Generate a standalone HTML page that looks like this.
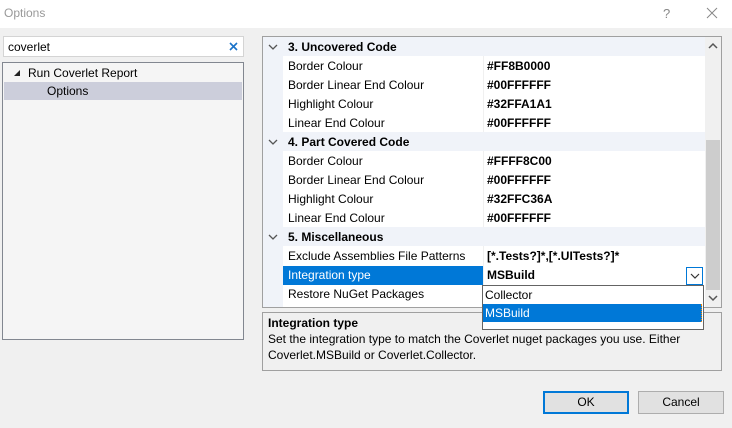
<!DOCTYPE html>
<html><head><style>
*{margin:0;padding:0;box-sizing:border-box}
body{width:732px;height:428px;background:#f0f0f0;font-family:"Liberation Sans",sans-serif;font-size:12px;color:#000;position:relative;overflow:hidden}
.a{position:absolute}
.t{white-space:nowrap;line-height:19px;padding-top:1px}
.b{font-weight:bold}
</style></head><body>
<div class="a" style="left:0;top:0;width:732px;height:28px;background:#fff"></div>
<div class="a t" style="left:4px;top:3px;color:#999;font-size:12px">Options</div>
<div class="a t" style="left:663px;top:3px;color:#888;font-size:13px">?</div>
<svg class="a" style="left:706px;top:7px" width="12" height="12"><path d="M1 1L11 11M11 1L1 11" stroke="#888" stroke-width="1"/></svg>

<div class="a" style="left:3px;top:36px;width:241px;height:21px;background:#fff;border:1px solid #d4d4d4"></div>
<div class="a t" style="left:8px;top:37px">coverlet</div>
<svg class="a" style="left:229px;top:42px" width="9" height="9"><path d="M1 1L8 8M8 1L1 8" stroke="#1a73c9" stroke-width="1.6"/></svg>

<div class="a" style="left:2px;top:62px;width:242px;height:278px;background:#f5f5f5;border:1px solid #828790"></div>
<svg class="a" style="left:13px;top:69px" width="8" height="8"><path d="M7 1L7 7L1 7Z" fill="#222"/></svg>
<div class="a t" style="left:28px;top:63px">Run Coverlet Report</div>
<div class="a" style="left:4px;top:82px;width:238px;height:18px;background:#cccedb"></div>
<div class="a t" style="left:47px;top:81px">Options</div>

<div class="a" style="left:262px;top:36px;width:460px;height:272px;background:#fff;border:1px solid #a0a0a0"></div>
<div class="a" style="left:263px;top:37px;width:20px;height:270px;background:#f0f3f9"></div>
<div class="a" style="left:263px;top:37px;width:442px;height:19px;background:#f0f3f9"></div>
<div class="a" style="left:263px;top:132px;width:442px;height:19px;background:#f0f3f9"></div>
<div class="a" style="left:263px;top:227px;width:442px;height:19px;background:#f0f3f9"></div>
<div class="a" style="left:483px;top:56px;width:1px;height:76px;background:#f0f0f0"></div>
<div class="a" style="left:483px;top:151px;width:1px;height:76px;background:#f0f0f0"></div>
<div class="a" style="left:483px;top:246px;width:1px;height:60px;background:#f0f0f0"></div>

<svg class="a" style="left:268px;top:43px" width="10" height="8"><path d="M1 2L5 6L9 2" stroke="#555" fill="none" stroke-width="1.3"/></svg>
<svg class="a" style="left:268px;top:138px" width="10" height="8"><path d="M1 2L5 6L9 2" stroke="#555" fill="none" stroke-width="1.3"/></svg>
<svg class="a" style="left:268px;top:233px" width="10" height="8"><path d="M1 2L5 6L9 2" stroke="#555" fill="none" stroke-width="1.3"/></svg>

<div class="a t b" style="left:288px;top:37px">3. Uncovered Code</div>
<div class="a t" style="left:288px;top:56px">Border Colour</div><div class="a t b" style="left:487px;top:56px">#FF8B0000</div>
<div class="a t" style="left:288px;top:75px">Border Linear End Colour</div><div class="a t b" style="left:487px;top:75px">#00FFFFFF</div>
<div class="a t" style="left:288px;top:94px">Highlight Colour</div><div class="a t b" style="left:487px;top:94px">#32FFA1A1</div>
<div class="a t" style="left:288px;top:113px">Linear End Colour</div><div class="a t b" style="left:487px;top:113px">#00FFFFFF</div>
<div class="a t b" style="left:288px;top:132px">4. Part Covered Code</div>
<div class="a t" style="left:288px;top:151px">Border Colour</div><div class="a t b" style="left:487px;top:151px">#FFFF8C00</div>
<div class="a t" style="left:288px;top:170px">Border Linear End Colour</div><div class="a t b" style="left:487px;top:170px">#00FFFFFF</div>
<div class="a t" style="left:288px;top:189px">Highlight Colour</div><div class="a t b" style="left:487px;top:189px">#32FFC36A</div>
<div class="a t" style="left:288px;top:208px">Linear End Colour</div><div class="a t b" style="left:487px;top:208px">#00FFFFFF</div>
<div class="a t b" style="left:288px;top:227px">5. Miscellaneous</div>
<div class="a t" style="left:288px;top:246px">Exclude Assemblies File Patterns</div><div class="a t b" style="left:487px;top:246px">[*.Tests?]*,[*.UITests?]*</div>
<div class="a" style="left:283px;top:266px;width:200px;height:19px;background:#0078d7"></div>
<div class="a t" style="left:288px;top:265px;color:#fff">Integration type</div><div class="a t b" style="left:487px;top:265px">MSBuild</div>
<div class="a" style="left:686px;top:267px;width:17px;height:18px;border:1px solid #0078d7;background:#fff"></div>
<svg class="a" style="left:690px;top:272px" width="10" height="8"><path d="M1 2L5 6L9 2" stroke="#333" fill="none" stroke-width="1.2"/></svg>
<div class="a t" style="left:288px;top:284px">Restore NuGet Packages</div>

<div class="a" style="left:705px;top:37px;width:16px;height:270px;background:#f0f0f0"></div>
<div class="a" style="left:706px;top:140px;width:14px;height:150px;background:#cdcdcd"></div>
<svg class="a" style="left:708px;top:42px" width="10" height="8"><path d="M1 6L5 2L9 6" stroke="#555" fill="none" stroke-width="1.5"/></svg>
<svg class="a" style="left:708px;top:294px" width="10" height="8"><path d="M1 2L5 6L9 2" stroke="#555" fill="none" stroke-width="1.5"/></svg>

<div class="a" style="left:262px;top:312px;width:460px;height:59px;border:1px solid #a0a0a0;background:#f0f0f0"></div>
<div class="a t b" style="left:268px;top:313px">Integration type</div>
<div class="a t" style="left:268px;top:330px;line-height:16px">Set the integration type to match the Coverlet nuget packages you use. Either<br>Coverlet.MSBuild or Coverlet.Collector.</div>

<div class="a" style="left:482px;top:285px;width:222px;height:45px;background:#fff;border:1px solid #646464"></div>
<div class="a t" style="left:485px;top:285px">Collector</div>
<div class="a" style="left:483px;top:304px;width:219px;height:18px;background:#0078d7;border-right:1px dotted #f80"></div>
<div class="a t" style="left:485px;top:303px;color:#fff">MSBuild</div>

<div class="a" style="left:543px;top:391px;width:86px;height:23px;background:#e1e1e1;border:2px solid #0078d7"></div>
<div class="a t" style="left:543px;top:392px;width:86px;text-align:center">OK</div>
<div class="a" style="left:638px;top:391px;width:86px;height:23px;background:#e1e1e1;border:1px solid #adadad"></div>
<div class="a t" style="left:638px;top:392px;width:86px;text-align:center">Cancel</div>
</body></html>
